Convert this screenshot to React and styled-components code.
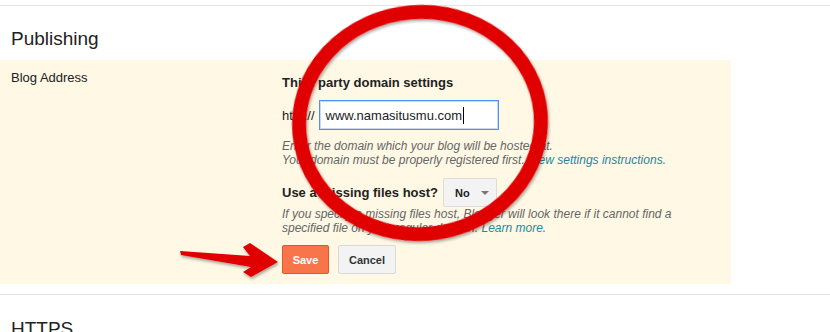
import styled, { createGlobalStyle } from "styled-components";

const GlobalStyle = createGlobalStyle`
  body {
    margin: 0;
    background: #fff;
    font-family: Arial, "Liberation Sans", sans-serif;
    color: #222;
  }
`;

const Page = styled.div`
  position: relative;
  width: 830px;
  height: 332px;
  overflow: hidden;
  padding-top: 5px;
  box-sizing: border-box;
`;

const Divider = styled.div`
  height: 1px;
  background: #e5e5e5;
  margin-top: ${(p) => p.$top || 0}px;
`;

const SectionTitle = styled.h2`
  margin: ${(p) => p.$top}px 0 0;
  padding-left: 11px;
  font-size: 19px;
  line-height: 24px;
  font-weight: normal;
  color: #222;
`;

const Panel = styled.div`
  width: 731px;
  margin-top: 9px;
  padding: 10px 0;
  box-sizing: border-box;
  background: #fef8e5;
  display: grid;
  grid-template-columns: 282px 1fr;
`;

const Label = styled.div`
  padding-left: 11px;
  font-size: 13px;
  line-height: 16px;
`;

const Fields = styled.div`
  padding-top: 5px;
  display: flex;
  flex-direction: column;
`;

const Heading = styled.div`
  font-size: 13px;
  line-height: 16px;
  font-weight: bold;
  color: #222;
`;

const Row = styled.div`
  display: flex;
  align-items: center;
  gap: ${(p) => p.$gap || 4}px;
  margin-top: ${(p) => p.$top || 0}px;
`;

const Prefix = styled.span`
  font-size: 13px;
  color: #222;
`;

const DomainField = styled.div`
  width: 180px;
  height: 30px;
  box-sizing: border-box;
  border: 1px solid #4d90fe;
  box-shadow: inset 0 0 0 1px #c9daf8;
  background: #fff;
  padding-left: 6px;
  display: flex;
  align-items: center;
  font-size: 13px;
  color: #222;
`;

const Caret = styled.span`
  width: 1px;
  height: 17px;
  background: #000;
  margin-left: 1px;
`;

const Help = styled.p`
  margin: ${(p) => p.$top || 0}px 0 0;
  font-size: 12px;
  line-height: 14px;
  font-style: italic;
  color: #666;

  a {
    color: #1a8a9d;
    text-decoration: none;
  }
`;

const Select = styled.div`
  width: 54px;
  height: 29px;
  box-sizing: border-box;
  border: 1px solid #dcdcdc;
  border-radius: 2px;
  background: #f3f3f3;
  display: flex;
  align-items: center;
  padding-left: 11px;
  gap: 11px;
  font-size: 11px;
  font-weight: bold;
  color: #222;
`;

const Arrow = styled.span`
  width: 0;
  height: 0;
  border-left: 4px solid transparent;
  border-right: 4px solid transparent;
  border-top: 4px solid #777;
`;

const Button = styled.button`
  height: 29px;
  width: ${(p) => p.$width}px;
  padding: 0;
  box-sizing: border-box;
  border-radius: 2px;
  font-family: Arial, "Liberation Sans", sans-serif;
  font-size: 11px;
  font-weight: bold;
  border: 1px solid ${(p) => (p.$primary ? "#e2562f" : "#d9d9d9")};
  background: ${(p) => (p.$primary ? "#f8754c" : "#f3f3f3")};
  color: ${(p) => (p.$primary ? "#fff" : "#333")};
`;

const Overlay = styled.svg`
  position: absolute;
  left: 0;
  top: 0;
  pointer-events: none;
`;

const App = () => {
  return (
    <Page>
      <GlobalStyle />
      <Divider />
      <SectionTitle $top={21}>Publishing</SectionTitle>
      <Panel>
        <Label>Blog Address</Label>
        <Fields>
          <Heading>Third party domain settings</Heading>
          <Row $top={9}>
            <Prefix>http://</Prefix>
            <DomainField>
              www.namasitusmu.com
              <Caret />
            </DomainField>
          </Row>
          <Help $top={9}>
            Enter the domain which your blog will be hosted at.
            <br />
            Your domain must be properly registered first.{" "}
            <a href="#">View settings instructions</a>.
          </Help>
          <Row $top={11} $gap={5}>
            <Heading>Use a missing files host?</Heading>
            <Select>
              No
              <Arrow />
            </Select>
          </Row>
          <Help>
            If you specify a missing files host, Blogger will look there if it cannot find a
            <br />
            specified file on your regular domain. <a href="#">Learn more</a>.
          </Help>
          <Row $top={10} $gap={9}>
            <Button $primary $width={47}>Save</Button>
            <Button $width={58}>Cancel</Button>
          </Row>
        </Fields>
      </Panel>
      <Divider $top={10} />
      <SectionTitle $top={22}>HTTPS</SectionTitle>

      <Overlay width="830" height="332" viewBox="0 0 830 332">
        <defs>
          <filter id="shade" x="-20%" y="-20%" width="140%" height="140%">
            <feDropShadow dx="1" dy="2" stdDeviation="1.5" floodColor="#000" floodOpacity="0.35" />
          </filter>
        </defs>
        <ellipse
          cx="420"
          cy="123"
          rx="121"
          ry="111"
          transform="rotate(-5 420 123)"
          fill="none"
          stroke="#e00000"
          strokeWidth="14"
          filter="url(#shade)"
        />
        <polygon
          points="180,251 250,256 243,247 250,243 278,262 251,277 243,272 251,267 181,255"
          fill="#e00000"
          filter="url(#shade)"
        />
      </Overlay>
    </Page>
  );
};

export default App;
